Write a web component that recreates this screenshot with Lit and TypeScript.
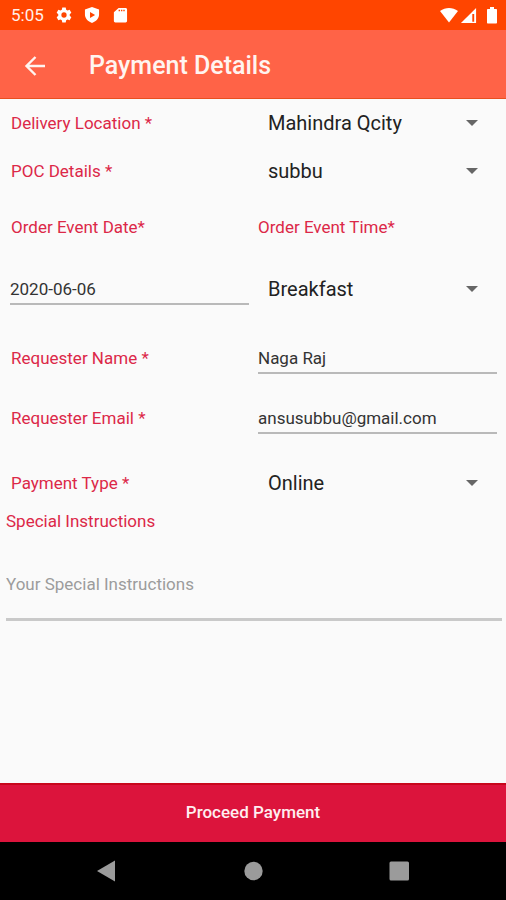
import { LitElement, html, css, svg } from "lit";
import { customElement, property } from "lit/decorators.js";

const caret = html`<svg class="caret" viewBox="0 0 12 6" aria-hidden="true">
  <path d="M0 0h12L6 6z" fill="#666" />
</svg>`;

@customElement("status-bar")
export class StatusBar extends LitElement {
  static styles = css`
    :host {
      display: flex;
      align-items: center;
      justify-content: space-between;
      height: 30px;
      padding: 0 8px 0 11px;
      background: #ff4500;
      color: #fff0ea;
      font-size: 17px;
      font-weight: 400;
    }
    .group {
      display: flex;
      align-items: center;
    }
    .left {
      gap: 12px;
    }
    .right {
      gap: 2px;
    }
    .icon {
      display: block;
      width: 16px;
      height: 18px;
      fill: #fff;
    }
    .wifi,
    .signal {
      width: 18px;
    }
    .signal {
      height: 17px;
    }
    .battery {
      width: 12px;
      margin-left: 6px;
    }
  `;

  render() {
    return html`
      <div class="group left">
        <span>5:05</span>
        <svg class="icon" viewBox="0 0 17 18">
          <path
            fill-rule="evenodd"
            d="M6.7 1h3.6l.5 2.3 1.5.9 2.2-.8 1.8 3.1-1.7 1.6v1.8l1.7 1.6-1.8 3.1-2.2-.8-1.5.9-.5 2.3H6.7l-.5-2.3-1.5-.9-2.2.8-1.8-3.1 1.7-1.6V8.1L.7 6.5l1.8-3.1 2.2.8 1.5-.9zM8.5 6.2a2.8 2.8 0 1 0 0 5.6 2.8 2.8 0 0 0 0-5.6z"
          />
        </svg>
        <svg class="icon" viewBox="0 0 17 18">
          <path
            fill-rule="evenodd"
            d="M8.5.5 16 3.2V8.5c0 4.300-3.300 7.500-7.500 9-4.200-1.500-7.500-4.700-7.500-9V3.2zM6.4 5.800v6.400l5.400-3.200z"
          />
        </svg>
        <svg class="icon" viewBox="0 0 17 18">
          <path
            fill-rule="evenodd"
            d="M7 1.5h7.5c.8 0 1.5.7 1.5 1.5v12.5c0 .8-.7 1.5-1.5 1.5h-11c-.8 0-1.5-.7-1.5-1.5V6zM7 3.5v1.500h1.500v-1.500zm2.500 0v1.500H11v-1.500zm2.500 0v1.500h1.500v-1.500z"
          />
        </svg>
      </div>
      <div class="group right">
        <svg class="icon wifi" viewBox="0 0 18 18">
          <path d="M0 5C5.500 1 12.500 1 18 5L9 16.500z" />
        </svg>
        <svg class="icon signal" viewBox="0 0 18 18">
          <path fill-rule="evenodd" d="M16.5 1v16H.5zM12.500 7.500v8h2v-8z" />
        </svg>
        <svg class="icon battery" viewBox="0 0 12 18">
          <path
            d="M4 1h4v2h2c.6 0 1 .4 1 1v12.500c0 .6-.4 1-1 1H2c-.6 0-1-.4-1-1V4c0-.6.4-1 1-1h2z"
          />
        </svg>
      </div>
    `;
  }
}

@customElement("nav-bar")
export class NavBar extends LitElement {
  static styles = css`
    :host {
      display: flex;
      justify-content: center;
      align-items: center;
      gap: 122px;
      height: 58px;
      background: #000;
    }
    .key {
      display: flex;
      width: 24px;
      height: 24px;
      padding: 0;
      border: 0;
      background: none;
    }
    .glyph {
      width: 24px;
      height: 24px;
      fill: #9b9b9b;
    }
  `;

  render() {
    const keys = [
      { name: "Back", shape: svg`<path d="M20 1.500v21L2 12z" />` },
      { name: "Home", shape: svg`<circle cx="12.500" cy="12" r="9.200" />` },
      {
        name: "Recent apps",
        shape: svg`<rect x="2.500" y="2.500" width="19.500" height="19" rx="1.500" />`,
      },
    ];
    return keys.map(
      (k) => html`<button class="key" aria-label=${k.name}>
        <svg class="glyph" viewBox="0 0 24 24">${k.shape}</svg>
      </button>`
    );
  }
}

@customElement("app-root")
export class AppRoot extends LitElement {
  @property() location = "Mahindra Qcity";

  static styles = css`
    :host {
      display: flex;
      flex-direction: column;
      min-height: 100vh;
      background: #fafafa;
      font-family: Roboto, "Liberation Sans", sans-serif;
      font-size: 17px;
      line-height: 20px;
    }
    * {
      box-sizing: border-box;
    }
    .app-bar {
      display: flex;
      align-items: center;
      gap: 43px;
      height: 69px;
      padding: 3px 24px 0;
      border-bottom: 1px solid #e8501f;
      background: #ff6347;
      color: #fff4f0;
    }
    .back {
      display: flex;
      padding: 0;
      border: 0;
      background: none;
    }
    .arrow {
      width: 22px;
      height: 22px;
      fill: none;
      stroke: #fff4f0;
      stroke-width: 2.4;
    }
    .title {
      margin: 0;
      font-size: 25px;
      line-height: 32px;
      font-weight: 500;
    }
    .form {
      flex: 1;
      display: flex;
      flex-direction: column;
    }
    .row {
      display: grid;
      grid-template-columns: 1fr 1fr;
      column-gap: 9px;
      align-items: center;
      min-height: 48px;
      padding: 0 9px 0 10px;
    }
    .tall {
      min-height: 60px;
    }
    .headings {
      min-height: 64px;
    }
    .spaced {
      margin-top: 9px;
    }
    .payment {
      margin-top: 11px;
    }
    .label {
      color: #dc2848;
    }
    .row .label:first-child {
      padding-left: 1px;
    }
    .select-wrap {
      position: relative;
      display: flex;
      align-items: center;
    }
    .select {
      width: 100%;
      height: 40px;
      padding: 0 32px 0 10px;
      border: 0;
      background: none;
      appearance: none;
      font: inherit;
      font-size: 20px;
      line-height: 26px;
      color: #222;
    }
    .caret {
      position: absolute;
      right: 19px;
      width: 12px;
      height: 6px;
      pointer-events: none;
    }
    .input {
      width: 100%;
      height: 32px;
      padding: 2px 0 0;
      border: 0;
      border-bottom: 2px solid #b9b9b9;
      border-radius: 0;
      background: none;
      font: inherit;
      color: #333;
      outline: 0;
    }
    .notes {
      display: flex;
      flex-direction: column;
      gap: 32px;
      padding: 4px 4px 0 6px;
    }
    .textarea {
      width: 100%;
      height: 58px;
      padding: 11px 0 0;
      border: 0;
      border-bottom: 3px solid #c9c9c9;
      background: none;
      font: inherit;
      color: #333;
      resize: none;
      outline: 0;
    }
    .textarea::placeholder {
      color: #9c9c9c;
      opacity: 1;
    }
    .submit {
      height: 59px;
      padding: 0 0 1px;
      border: 0;
      box-shadow: inset 0 2px #c8061c;
      background: #dc143c;
      color: #ffeef0;
      font: inherit;
      font-weight: 500;
    }
  `;

  private select(id: string, value: string) {
    return html`<div class="select-wrap">
      <select class="select" id=${id}>
        <option>${value}</option>
      </select>
      ${caret}
    </div>`;
  }

  render() {
    return html`
      <status-bar></status-bar>
      <header class="app-bar">
        <button class="back" aria-label="Back">
          <svg class="arrow" viewBox="0 0 22 22">
            <path d="M21 11H3M11.5 2 2.5 11l9 9" />
          </svg>
        </button>
        <h1 class="title">Payment Details</h1>
      </header>
      <main class="form">
        <div class="row">
          <label class="label" for="location">Delivery Location *</label>
          ${this.select("location", this.location)}
        </div>
        <div class="row">
          <label class="label" for="poc">POC Details *</label>
          ${this.select("poc", "subbu")}
        </div>
        <div class="row headings">
          <label class="label" for="date">Order Event Date*</label>
          <label class="label" for="time">Order Event Time*</label>
        </div>
        <div class="row tall">
          <input class="input" id="date" type="text" value="2020-06-06" />
          ${this.select("time", "Breakfast")}
        </div>
        <div class="row tall spaced">
          <label class="label" for="name">Requester Name *</label>
          <input class="input" id="name" type="text" value="Naga Raj" />
        </div>
        <div class="row tall">
          <label class="label" for="email">Requester Email *</label>
          <input class="input" id="email" type="email" value="ansusubbu@gmail.com" />
        </div>
        <div class="row payment">
          <label class="label" for="payment">Payment Type *</label>
          ${this.select("payment", "Online")}
        </div>
        <div class="notes">
          <label class="label" for="notes">Special Instructions</label>
          <textarea
            class="textarea"
            id="notes"
            placeholder="Your Special Instructions"
          ></textarea>
        </div>
      </main>
      <button class="submit">Proceed Payment</button>
      <nav-bar></nav-bar>
    `;
  }
}
